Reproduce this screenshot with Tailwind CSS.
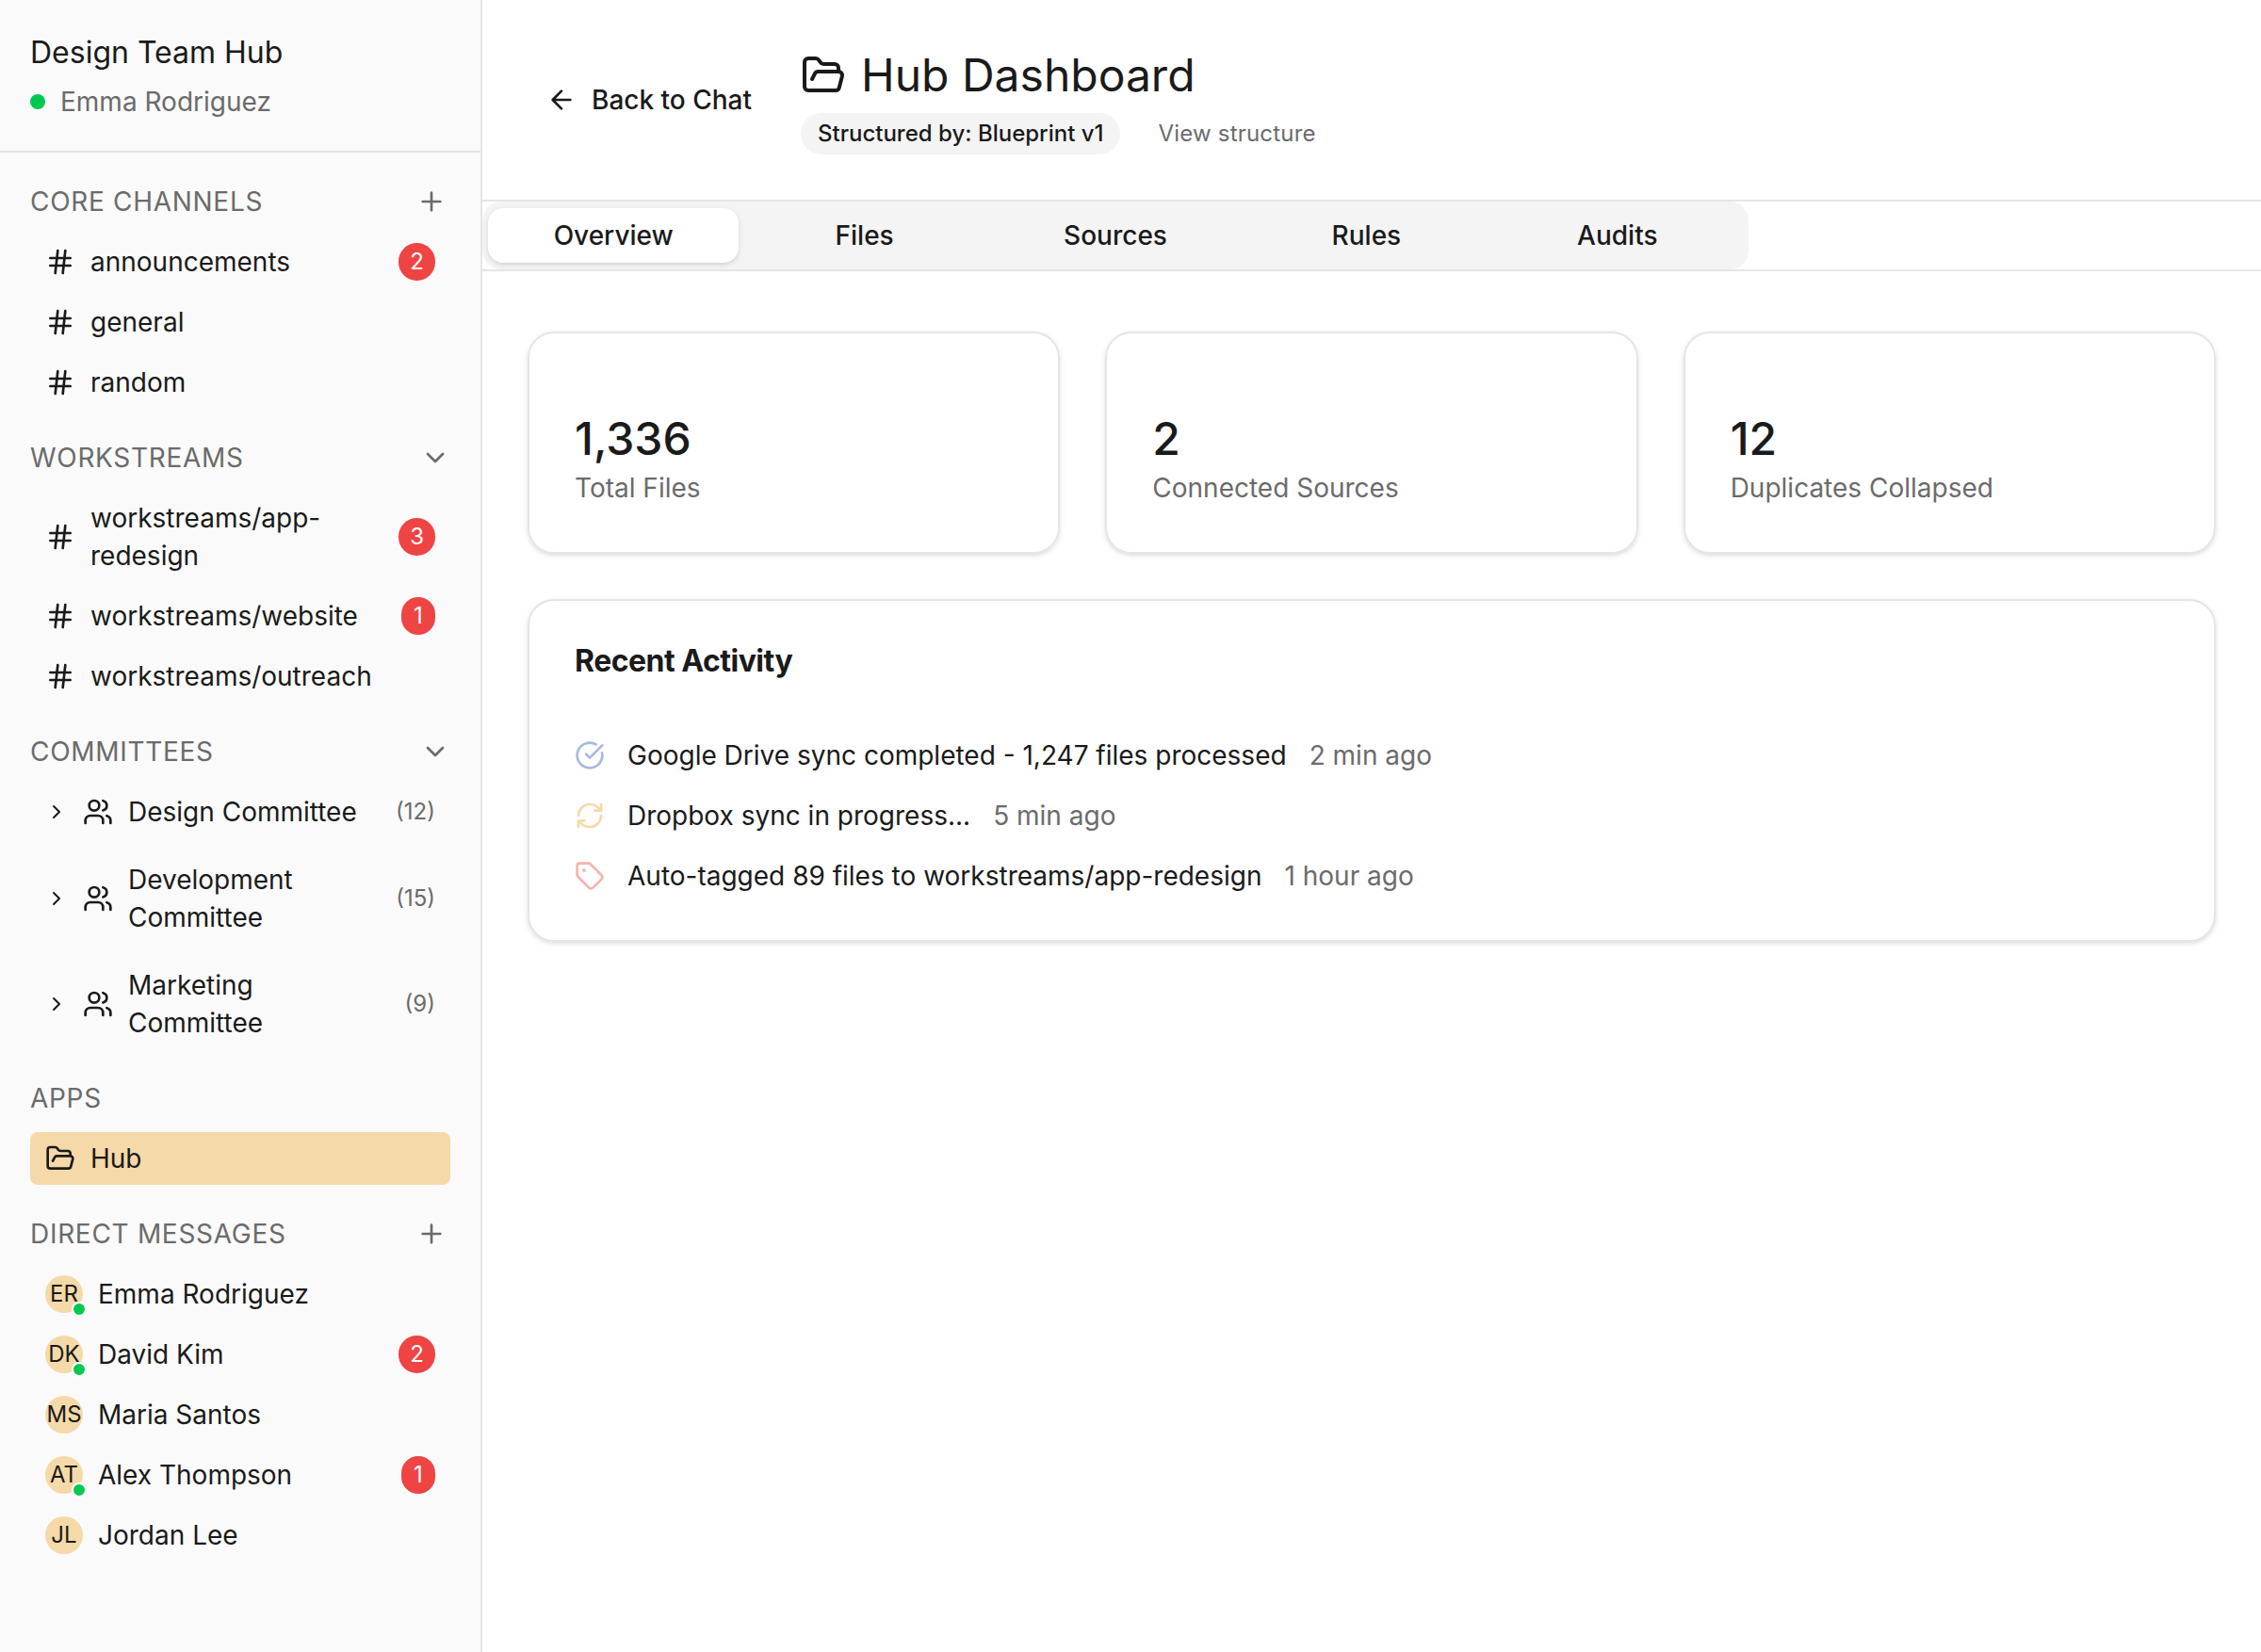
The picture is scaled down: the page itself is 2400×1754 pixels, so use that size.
<!DOCTYPE html>
<html lang="en">
<head>
<meta charset="utf-8">
<title>Design Team Hub</title>
<script src="https://cdn.jsdelivr.net/npm/@tailwindcss/browser@4"></script>
</head>
<body class="bg-white font-['Inter',sans-serif] text-[28px] leading-10 text-[#1a1a1a] antialiased">
<svg class="hidden">
  <defs>
    <symbol id="hash" viewBox="0 0 24 24"><path d="M4 9h16M4 15h16M10 3 8 21M16 3l-2 18"/></symbol>
    <symbol id="plus" viewBox="0 0 24 24"><path d="M5 12h14M12 5v14"/></symbol>
    <symbol id="down" viewBox="0 0 24 24"><path d="m6 9 6 6 6-6"/></symbol>
    <symbol id="right" viewBox="0 0 24 24"><path d="m9 18 6-6-6-6"/></symbol>
    <symbol id="left" viewBox="0 0 24 24"><path d="m12 19-7-7 7-7M19 12H5"/></symbol>
    <symbol id="users" viewBox="0 0 24 24"><path d="M16 21v-2a4 4 0 0 0-4-4H6a4 4 0 0 0-4 4v2"/><circle cx="9" cy="7" r="4"/><path d="M22 21v-2a4 4 0 0 0-3-3.87M16 3.13a4 4 0 0 1 0 7.75"/></symbol>
    <symbol id="folder" viewBox="0 0 24 24"><path d="m6 14 1.5-2.9A2 2 0 0 1 9.24 10H20a2 2 0 0 1 1.94 2.5l-1.54 6a2 2 0 0 1-1.95 1.5H4a2 2 0 0 1-2-2V5a2 2 0 0 1 2-2h3.9a2 2 0 0 1 1.69.9l.81 1.2a2 2 0 0 0 1.67.9H18a2 2 0 0 1 2 2v2"/></symbol>
    <symbol id="check" viewBox="0 0 24 24"><path d="M21.801 10A10 10 0 1 1 17 3.335"/><path d="m9 11 3 3L22 4"/></symbol>
    <symbol id="sync" viewBox="0 0 24 24"><path d="M3 12a9 9 0 0 1 9-9 9.75 9.75 0 0 1 6.74 2.74L21 8"/><path d="M21 3v5h-5"/><path d="M21 12a9 9 0 0 1-9 9 9.75 9.75 0 0 1-6.74-2.74L3 16"/><path d="M8 16H3v5"/></symbol>
    <symbol id="tag" viewBox="0 0 24 24"><path d="M12.586 2.586A2 2 0 0 0 11.172 2H4a2 2 0 0 0-2 2v7.172a2 2 0 0 0 .586 1.414l8.704 8.704a2.426 2.426 0 0 0 3.42 0l6.58-6.58a2.426 2.426 0 0 0 0-3.42z"/><circle cx="7.5" cy="7.5" r=".5" fill="currentColor"/></symbol>
  </defs>
</svg>
<div class="flex h-[1754px] w-[2400px] overflow-hidden">
  <aside class="w-[512px] shrink-0 border-r-2 border-[#e5e5e5] bg-[#fafafa]">
    <div class="border-b-2 border-[#e5e5e5] p-8">
      <h1 class="text-[32px] leading-[48px]">Design Team Hub</h1>
      <div class="mt-2 flex items-center gap-4 text-[#6b6b6b]"><span class="size-4 rounded-full bg-[#00c950]"></span>Emma Rodriguez</div>
    </div>
    <nav class="flex flex-col gap-8 p-8">
      <section>
        <div class="mb-4 flex items-center justify-between text-[#6b6b6b]"><h2 class="tracking-wide">CORE CHANNELS</h2><button class="p-1"><svg class="size-8 fill-none stroke-current stroke-2 [stroke-linecap:round] [stroke-linejoin:round]"><use href="#plus"/></svg></button></div>
        <div class="flex flex-col gap-2">
          <div class="flex items-center gap-4 px-4 py-2"><svg class="size-8 shrink-0 fill-none stroke-current stroke-2 [stroke-linecap:round] [stroke-linejoin:round]"><use href="#hash"/></svg><span class="flex-1">announcements</span><span class="rounded-full bg-[#ef4444] px-3 py-1 text-2xl leading-8 text-white">2</span></div>
          <div class="flex items-center gap-4 px-4 py-2"><svg class="size-8 shrink-0 fill-none stroke-current stroke-2 [stroke-linecap:round] [stroke-linejoin:round]"><use href="#hash"/></svg><span class="flex-1">general</span></div>
          <div class="flex items-center gap-4 px-4 py-2"><svg class="size-8 shrink-0 fill-none stroke-current stroke-2 [stroke-linecap:round] [stroke-linejoin:round]"><use href="#hash"/></svg><span class="flex-1">random</span></div>
        </div>
      </section>
      <section>
        <div class="mb-4 flex items-center justify-between text-[#6b6b6b]"><h2 class="tracking-wide">WORKSTREAMS</h2><svg class="size-8 fill-none stroke-current stroke-2 [stroke-linecap:round] [stroke-linejoin:round]"><use href="#down"/></svg></div>
        <div class="flex flex-col gap-2">
          <div class="flex items-center gap-4 px-4 py-2"><svg class="size-8 shrink-0 fill-none stroke-current stroke-2 [stroke-linecap:round] [stroke-linejoin:round]"><use href="#hash"/></svg><span class="flex-1">workstreams/app-redesign</span><span class="rounded-full bg-[#ef4444] px-3 py-1 text-2xl leading-8 text-white">3</span></div>
          <div class="flex items-center gap-4 px-4 py-2"><svg class="size-8 shrink-0 fill-none stroke-current stroke-2 [stroke-linecap:round] [stroke-linejoin:round]"><use href="#hash"/></svg><span class="flex-1">workstreams/website</span><span class="min-w-9 rounded-full bg-[#ef4444] px-3 py-1 text-center text-2xl leading-8 text-white">1</span></div>
          <div class="flex items-center gap-4 px-4 py-2"><svg class="size-8 shrink-0 fill-none stroke-current stroke-2 [stroke-linecap:round] [stroke-linejoin:round]"><use href="#hash"/></svg><span class="flex-1">workstreams/outreach</span></div>
        </div>
      </section>
      <section>
        <div class="mb-4 flex items-center justify-between text-[#6b6b6b]"><h2 class="tracking-wide">COMMITTEES</h2><svg class="size-8 fill-none stroke-current stroke-2 [stroke-linecap:round] [stroke-linejoin:round]"><use href="#down"/></svg></div>
        <div class="flex flex-col gap-4">
          <div class="flex items-center gap-4 px-4 py-2"><svg class="size-6 shrink-0 fill-none stroke-current stroke-2 [stroke-linecap:round] [stroke-linejoin:round]"><use href="#right"/></svg><svg class="size-8 shrink-0 fill-none stroke-current stroke-2 [stroke-linecap:round] [stroke-linejoin:round]"><use href="#users"/></svg><span class="flex-1">Design Committee</span><span class="text-2xl leading-8 text-[#6b6b6b]">(12)</span></div>
          <div class="flex items-center gap-4 px-4 py-2"><svg class="size-6 shrink-0 fill-none stroke-current stroke-2 [stroke-linecap:round] [stroke-linejoin:round]"><use href="#right"/></svg><svg class="size-8 shrink-0 fill-none stroke-current stroke-2 [stroke-linecap:round] [stroke-linejoin:round]"><use href="#users"/></svg><span class="flex-1">Development Committee</span><span class="text-2xl leading-8 text-[#6b6b6b]">(15)</span></div>
          <div class="flex items-center gap-4 px-4 py-2"><svg class="size-6 shrink-0 fill-none stroke-current stroke-2 [stroke-linecap:round] [stroke-linejoin:round]"><use href="#right"/></svg><svg class="size-8 shrink-0 fill-none stroke-current stroke-2 [stroke-linecap:round] [stroke-linejoin:round]"><use href="#users"/></svg><span class="flex-1">Marketing Committee</span><span class="text-2xl leading-8 text-[#6b6b6b]">(9)</span></div>
        </div>
      </section>
      <section>
        <h2 class="mb-4 tracking-wide text-[#6b6b6b]">APPS</h2>
        <div class="flex items-center gap-4 rounded-lg bg-[#f5d9a8] px-4 py-2"><svg class="size-8 shrink-0 fill-none stroke-current stroke-2 [stroke-linecap:round] [stroke-linejoin:round]"><use href="#folder"/></svg><span>Hub</span></div>
      </section>
      <section>
        <div class="mb-4 flex items-center justify-between text-[#6b6b6b]"><h2 class="tracking-wide">DIRECT MESSAGES</h2><button class="p-1"><svg class="size-8 fill-none stroke-current stroke-2 [stroke-linecap:round] [stroke-linejoin:round]"><use href="#plus"/></svg></button></div>
        <div class="flex flex-col gap-2">
          <div class="flex items-center gap-4 px-4 py-2"><span class="relative flex size-10 items-center justify-center rounded-full bg-[#f5d9a8] text-2xl leading-8">ER<i class="absolute -right-1 -bottom-1 size-4 rounded-full border-2 border-white bg-[#00c950]"></i></span><span class="flex-1">Emma Rodriguez</span></div>
          <div class="flex items-center gap-4 px-4 py-2"><span class="relative flex size-10 items-center justify-center rounded-full bg-[#f5d9a8] text-2xl leading-8">DK<i class="absolute -right-1 -bottom-1 size-4 rounded-full border-2 border-white bg-[#00c950]"></i></span><span class="flex-1">David Kim</span><span class="rounded-full bg-[#ef4444] px-3 py-1 text-2xl leading-8 text-white">2</span></div>
          <div class="flex items-center gap-4 px-4 py-2"><span class="flex size-10 items-center justify-center rounded-full bg-[#f5d9a8] text-2xl leading-8">MS</span><span class="flex-1">Maria Santos</span></div>
          <div class="flex items-center gap-4 px-4 py-2"><span class="relative flex size-10 items-center justify-center rounded-full bg-[#f5d9a8] text-2xl leading-8">AT<i class="absolute -right-1 -bottom-1 size-4 rounded-full border-2 border-white bg-[#00c950]"></i></span><span class="flex-1">Alex Thompson</span><span class="min-w-9 rounded-full bg-[#ef4444] px-3 py-1 text-center text-2xl leading-8 text-white">1</span></div>
          <div class="flex items-center gap-4 px-4 py-2"><span class="flex size-10 items-center justify-center rounded-full bg-[#f5d9a8] text-2xl leading-8">JL</span><span class="flex-1">Jordan Lee</span></div>
        </div>
      </section>
    </nav>
  </aside>
  <main class="min-w-0 flex-1">
    <header class="flex items-center gap-8 border-b-2 border-[#e5e5e5] p-12">
      <button class="flex items-center gap-4 px-5 font-medium"><svg class="size-8 fill-none stroke-current stroke-2 [stroke-linecap:round] [stroke-linejoin:round]"><use href="#left"/></svg>Back to Chat</button>
      <div>
        <h1 class="flex items-center gap-4 text-5xl leading-[64px]"><svg class="size-12 fill-none stroke-current stroke-2 [stroke-linecap:round] [stroke-linejoin:round]"><use href="#folder"/></svg>Hub Dashboard</h1>
        <div class="mt-2 flex items-center gap-4 text-2xl leading-8">
          <span class="rounded-full bg-[#f4f4f4] px-[18px] py-1.5 font-medium">Structured by: Blueprint v1</span>
          <button class="px-6 tracking-[0.2px] text-[#6b6b6b]">View structure</button>
        </div>
      </div>
    </header>
    <div class="border-b-2 border-[#e5e5e5]">
      <div class="grid h-[72px] w-[1344px] grid-cols-5 items-center rounded-[20px] bg-[#f4f4f4] px-1.5 text-center font-medium">
        <div class="flex h-[58px] items-center justify-center rounded-2xl bg-white shadow-[0_2px_6px_rgba(0,0,0,0.1),0_2px_4px_-2px_rgba(0,0,0,0.1)]">Overview</div>
        <div>Files</div>
        <div>Sources</div>
        <div>Rules</div>
        <div>Audits</div>
      </div>
    </div>
    <div class="px-12 pt-16">
      <div class="grid grid-cols-3 gap-12">
        <div class="rounded-[28px] border-2 border-[#e5e5e5] px-12 pt-20 pb-12 shadow-[0_2px_6px_rgba(0,0,0,0.1),0_2px_4px_-2px_rgba(0,0,0,0.1)]"><div class="text-5xl leading-[64px] font-medium">1,336</div><div class="text-[#6b6b6b]">Total Files</div></div>
        <div class="rounded-[28px] border-2 border-[#e5e5e5] px-12 pt-20 pb-12 shadow-[0_2px_6px_rgba(0,0,0,0.1),0_2px_4px_-2px_rgba(0,0,0,0.1)]"><div class="text-5xl leading-[64px] font-medium">2</div><div class="text-[#6b6b6b]">Connected Sources</div></div>
        <div class="rounded-[28px] border-2 border-[#e5e5e5] px-12 pt-20 pb-12 shadow-[0_2px_6px_rgba(0,0,0,0.1),0_2px_4px_-2px_rgba(0,0,0,0.1)]"><div class="text-5xl leading-[64px] font-medium">12</div><div class="text-[#6b6b6b]">Duplicates Collapsed</div></div>
      </div>
      <div class="mt-12 rounded-[28px] border-2 border-[#e5e5e5] p-12 shadow-[0_2px_6px_rgba(0,0,0,0.1),0_2px_4px_-2px_rgba(0,0,0,0.1)]">
        <h3 class="text-[32px] leading-8 font-bold tracking-[-0.5px]">Recent Activity</h3>
        <div class="mt-16 flex flex-col gap-6">
          <div class="flex items-center gap-6"><svg class="size-8 fill-none stroke-[#a8b9e0] stroke-2 [stroke-linecap:round] [stroke-linejoin:round]"><use href="#check"/></svg><span>Google Drive sync completed - 1,247 files processed</span><span class="text-[#6b6b6b]">2 min ago</span></div>
          <div class="flex items-center gap-6"><svg class="size-8 fill-none stroke-[#f5d9a8] stroke-2 [stroke-linecap:round] [stroke-linejoin:round]"><use href="#sync"/></svg><span>Dropbox sync in progress...</span><span class="text-[#6b6b6b]">5 min ago</span></div>
          <div class="flex items-center gap-6"><svg class="size-8 fill-none stroke-[#f7b2ad] stroke-2 text-[#f7b2ad] [stroke-linecap:round] [stroke-linejoin:round]"><use href="#tag"/></svg><span>Auto-tagged 89 files to workstreams/app-redesign</span><span class="text-[#6b6b6b]">1 hour ago</span></div>
        </div>
      </div>
    </div>
  </main>
</div>
</body>
</html>
